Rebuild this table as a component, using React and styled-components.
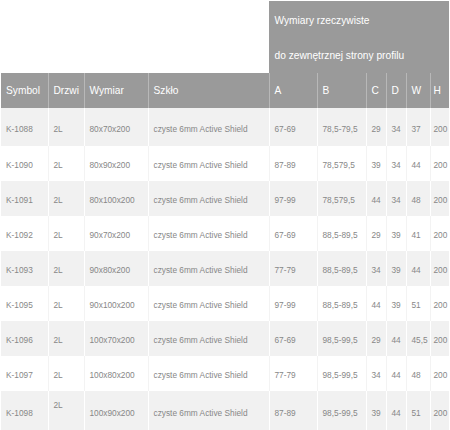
import React from "react";
import styled, { createGlobalStyle } from "styled-components";

const Global = createGlobalStyle`
  html, body { margin: 0; padding: 0; background: #fff; }
  body { font-family: "Liberation Sans", Arial, sans-serif; }
`;

const Wrap = styled.div`
  padding: 1px 1px 0 1px;
  width: 448px;
`;

const Table = styled.table`
  width: 448px;
  table-layout: fixed;
  border-collapse: collapse;
  border-spacing: 0;
`;

const HeadCell = styled.th`
  background: ${(p) => (p.$empty ? "#fff" : "#9a9a9a")};
  color: #fff;
  font-weight: normal;
  font-size: 10.2px;
  text-align: left;
  vertical-align: middle;
  padding: 0 0 0 ${(p) => (p.$last ? 3 : 5)}px;
  height: 35px;
  white-space: nowrap;
  border-left: ${(p) => (p.$first ? "none" : "1px solid #b8b8b8")};
`;

const GroupCell = styled.th`
  background: #9a9a9a;
  color: #fff;
  font-weight: normal;
  font-size: 10.2px;
  text-align: left;
  padding: 2px 0 0 5px;
  vertical-align: top;
  border-left: 1px solid #9a9a9a;
`;

const GroupLine = styled.div`
  height: 35px;
  line-height: 35px;
  white-space: nowrap;
`;

const Row = styled.tr`
  background: ${(p) => (p.$shaded ? "#f1f1f1" : "#fff")};
  height: ${(p) => p.$h}px;
`;

const Cell = styled.td`
  color: #878787;
  font-size: 8.3px;
  text-align: left;
  vertical-align: middle;
  padding: ${(p) => (p.$raised ? "0 0 12px" : "3px 0 0")};
  padding-left: ${(p) => (p.$last ? 3 : 5)}px;
  white-space: nowrap;
  border-left: ${(p) => (p.$first ? "none" : `1px solid ${p.$shaded ? "#ffffff" : "#f3f3f3"}`)};
`;

const widths = [47, 36, 64, 121, 48, 49, 20, 20, 24, 19];
const heads = ["Symbol", "Drzwi", "Wymiar", "Szkło", "A", "B", "C", "D", "W", "H"];

const rows = [
  ["K-1088", "2L", "80x70x200", "czyste 6mm Active Shield", "67-69", "78,5-79,5", "29", "34", "37", "200"],
  ["K-1090", "2L", "80x90x200", "czyste 6mm Active Shield", "87-89", "78,579,5", "39", "34", "44", "200"],
  ["K-1091", "2L", "80x100x200", "czyste 6mm Active Shield", "97-99", "78,579,5", "44", "34", "48", "200"],
  ["K-1092", "2L", "90x70x200", "czyste 6mm Active Shield", "67-69", "88,5-89,5", "29", "39", "41", "200"],
  ["K-1093", "2L", "90x80x200", "czyste 6mm Active Shield", "77-79", "88,5-89,5", "34", "39", "44", "200"],
  ["K-1095", "2L", "90x100x200", "czyste 6mm Active Shield", "97-99", "88,5-89,5", "44", "39", "51", "200"],
  ["K-1096", "2L", "100x70x200", "czyste 6mm Active Shield", "67-69", "98,5-99,5", "29", "44", "45,5", "200"],
  ["K-1097", "2L", "100x80x200", "czyste 6mm Active Shield", "77-79", "98,5-99,5", "34", "44", "48", "200"],
  ["K-1098", "2L", "100x90x200", "czyste 6mm Active Shield", "87-89", "98,5-99,5", "39", "44", "51", "200"],
];

const heights = [38, 35, 35, 35, 35, 35, 35, 35, 40];

export default function App() {
  return (
    <>
      <Global />
      <Wrap>
        <Table>
          <colgroup>
            {widths.map((w, i) => (
              <col key={i} style={{ width: w }} />
            ))}
          </colgroup>
          <thead>
            <tr>
              <HeadCell $empty $first />
              <HeadCell $empty $first />
              <HeadCell $empty $first />
              <HeadCell $empty $first />
              <GroupCell colSpan={6}>
                <GroupLine>Wymiary rzeczywiste</GroupLine>
                <GroupLine>do zewnętrznej strony profilu</GroupLine>
              </GroupCell>
            </tr>
            <tr>
              {heads.map((h, i) => (
                <HeadCell key={h} $first={i === 0} $last={i === heads.length - 1}>
                  {h}
                </HeadCell>
              ))}
            </tr>
          </thead>
          <tbody>
            {rows.map((r, ri) => {
              const shaded = ri % 2 === 0;
              return (
                <Row key={r[0]} $shaded={shaded} $h={heights[ri]}>
                  {r.map((c, ci) => (
                    <Cell
                      key={ci}
                      $first={ci === 0}
                      $last={ci === r.length - 1}
                      $shaded={shaded}
                      $raised={ri === rows.length - 1 && ci === 1}
                    >
                      {c}
                    </Cell>
                  ))}
                </Row>
              );
            })}
          </tbody>
        </Table>
      </Wrap>
    </>
  );
}
